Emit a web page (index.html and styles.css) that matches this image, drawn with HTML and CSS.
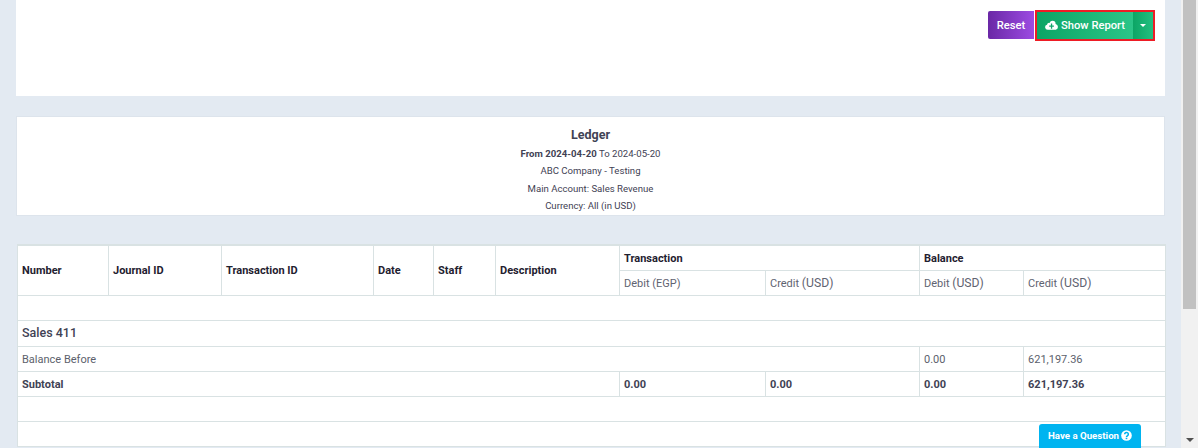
FILE: index.html
```html
<!DOCTYPE html>
<html lang="en">
<head>
<meta charset="utf-8">
<title>Ledger</title>
<link rel="stylesheet" href="styles.css">
</head>
<body>
<div class="shell">
  <main class="content">
    <section class="panel filters">
      <div class="actions">
        <button class="btn btn-reset" type="button">Reset</button>
        <div class="split">
          <button class="btn btn-show" type="button">
            <svg class="cloud" viewBox="0 0 13 10" aria-hidden="true"><path fill="#fff" d="M2.700 9.800A2.600 2.600 0 0 1 2 4.700 2.300 2.300 0 0 1 4.600 2.900 3.300 3.300 0 0 1 7.500.7 3.200 3.200 0 0 1 10.600 4a3 3 0 0 1 .2 5.800Z"/><path fill="#12a66c" d="M5.900 3.600h1.300v2h1.700v1.200H7.200v1.900H5.900V6.800H4.200V5.600h1.700Z"/></svg>
            Show Report
          </button>
          <button class="btn btn-caret" type="button" aria-label="More"><span class="caret"></span></button>
        </div>
      </div>
    </section>

    <section class="panel heading">
      <h1>Ledger</h1>
      <p><b>From 2024-04-20</b> To 2024-05-20</p>
      <p>ABC Company - Testing</p>
      <p>Main Account: Sales Revenue</p>
      <p>Currency: All (in USD)</p>
    </section>

    <section class="panel sheet">
      <table>
        <colgroup>
          <col class="c1"><col class="c2"><col class="c3"><col class="c4"><col class="c5"><col class="c6"><col class="c7"><col class="c8"><col class="c9"><col class="c10">
        </colgroup>
        <thead>
          <tr>
            <th rowspan="2">Number</th>
            <th rowspan="2">Journal ID</th>
            <th rowspan="2">Transaction ID</th>
            <th rowspan="2">Date</th>
            <th rowspan="2">Staff</th>
            <th rowspan="2">Description</th>
            <th colspan="2">Transaction</th>
            <th colspan="2">Balance</th>
          </tr>
          <tr class="sub">
            <td>Debit (EGP)</td>
            <td>Credit <span class="cur">(USD)</span></td>
            <td>Debit <span class="cur">(USD)</span></td>
            <td>Credit <span class="cur">(USD)</span></td>
          </tr>
        </thead>
        <tbody>
          <tr class="blank"><td colspan="10"></td></tr>
          <tr class="group"><td colspan="10">Sales 411</td></tr>
          <tr>
            <td colspan="8">Balance Before</td>
            <td>0.00</td>
            <td>621,197.36</td>
          </tr>
          <tr class="total">
            <td colspan="6">Subtotal</td>
            <td>0.00</td>
            <td>0.00</td>
            <td>0.00</td>
            <td>621,197.36</td>
          </tr>
          <tr class="blank"><td colspan="10"></td></tr>
          <tr class="blank"><td colspan="10"></td></tr>
        </tbody>
      </table>
    </section>
  </main>

  <aside class="scrollbar" aria-hidden="true">
    <div class="thumb"></div>
    <div class="arrow"></div>
  </aside>
</div>

<a class="question" href="#">Have a Question
  <svg class="help" viewBox="0 0 12 12" aria-hidden="true"><circle cx="6" cy="6" r="5.800" fill="#fff"/><path fill="none" stroke="#00b4f0" stroke-width="1.700" d="M4 4.600a2 1.900 0 1 1 3.200 1.500c-.8.6-1.200.9-1.200 1.600"/><rect x="5.100" y="8.400" width="1.800" height="1.600" fill="#00b4f0"/></svg>
</a>
</body>
</html>
```

FILE: styles.css
```css
* { box-sizing: border-box; }

html, body {
  margin: 0;
  height: 100%;
  overflow: hidden;
}

body {
  background: #e3eaf2;
  color: #3f4254;
  font-family: Roboto, "Liberation Sans", sans-serif;
  font-size: 10px;
}

.shell {
  display: flex;
  height: 448px;
  overflow: hidden;
}

.content {
  flex: 1;
  min-width: 0;
  padding: 0 16px;
}

.panel {
  background: #fff;
  width: 1149px;
}

.filters {
  height: 96px;
  padding: 10px 10px 0 0;
}

.actions {
  display: flex;
  justify-content: flex-end;
  align-items: flex-start;
  gap: 1px;
}

.btn {
  border: 0;
  color: #fff;
  font-family: inherit;
  font-size: 11.2px;
  font-weight: 500;
  padding: 0;
  height: 28px;
  display: flex;
  align-items: center;
  justify-content: center;
}

.btn-reset {
  margin-top: 1px;
  width: 46px;
  background: linear-gradient(90deg, #6a28a6, #9c4be2);
  border-radius: 2px 0 0 2px;
}

.split {
  display: flex;
  border: 2px solid #ee1c25;
  height: 31px;
  width: 120px;
  background: #0fa968;
}

.btn-show {
  width: 96px;
  height: 27px;
  gap: 3px;
  background: linear-gradient(90deg, #0ca565, #2bc588);
}

.cloud {
  width: 13px;
  height: 10px;
  margin-top: -2px;
}

.btn-caret {
  width: 20px;
  height: 27px;
  background: linear-gradient(90deg, #0ca565, #23bf80);
}

.caret {
  width: 0;
  height: 0;
  border-left: 3px solid transparent;
  border-right: 3px solid transparent;
  border-top: 3px solid #fff;
}

.heading {
  margin-top: 20px;
  height: 100px;
  border: 1px solid #dde4ec;
  text-align: center;
  padding-top: 11px;
}

.heading h1 {
  margin: 0 0 3px;
  font-size: 12.5px;
  line-height: 14px;
  font-weight: 700;
}

.heading p {
  margin: 0;
  line-height: 17.3px;
  font-size: 9.6px;
}

.heading b {
  font-weight: 700;
}

.sheet {
  margin-top: 28px;
  background: #e3eaf2;
  padding-left: 1px;
}

table {
  width: 1148px;
  table-layout: fixed;
  border-collapse: collapse;
  background: #fff;
  font-size: 11px;
}

.c1 { width: 91px; }
.c2 { width: 113px; }
.c3 { width: 152px; }
.c4 { width: 60px; }
.c5 { width: 62px; }
.c6 { width: 124px; }
.c7 { width: 146px; }
.c8 { width: 154px; }
.c9 { width: 104px; }
.c10 { width: 142px; }

th, td {
  border: 1px solid #d9e2e3;
  padding: 2px 4px 0;
  height: 25px;
  text-align: left;
  vertical-align: middle;
  line-height: 14px;
}

th {
  color: #1f2130;
  font-weight: 700;
  font-size: 11px;
}

thead tr:first-child th {
  border-top: 2px solid #d9e2e3;
}

.sub td {
  color: #5f6371;
}

.cur {
  font-size: 12.2px;
}

.blank td {
  height: 25px;
}

.group td {
  height: 26px;
  padding-top: 0;
  font-size: 12.5px;
  font-weight: 500;
}

.total td {
  border-top-color: #c9cfd1;
  font-weight: 700;
}

tbody tr:not(.group):not(.total) td {
  color: #5c5f6c;
}

.scrollbar {
  position: relative;
  flex: none;
  width: 17px;
  background: #f1f1f1;
}

.thumb {
  margin-left: 2px;
  width: 13px;
  height: 309px;
  background: #c1c1c1;
}

.arrow {
  position: absolute;
  left: 5px;
  bottom: 6px;
  width: 0;
  height: 0;
  border-left: 4px solid transparent;
  border-right: 4px solid transparent;
  border-top: 4px solid #505050;
}

.question {
  position: fixed;
  left: 1039px;
  top: 424px;
  width: 102px;
  height: 24px;
  padding-bottom: 2px;
  display: flex;
  align-items: center;
  justify-content: center;
  gap: 2px;
  background: #00b4f0;
  border-radius: 3px 3px 0 0;
  color: #fff;
  font-size: 9.7px;
  font-weight: 700;
  text-decoration: none;
}

.help {
  width: 11px;
  height: 11px;
}
```
